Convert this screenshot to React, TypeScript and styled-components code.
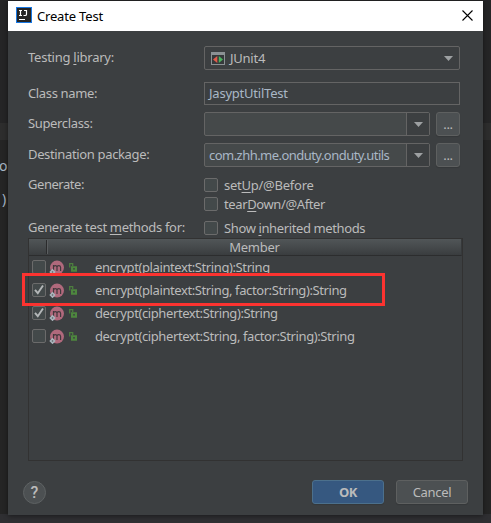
import React from "react";
import styled, { createGlobalStyle, css } from "styled-components";

const GlobalStyle = createGlobalStyle`
  * { box-sizing: border-box; }
  body { margin: 0; background: #272727; overflow: hidden; }
`;

const Screen = styled.div`
  position: relative;
  width: 491px;
  height: 523px;
  padding: 1px 8px 0;
  overflow: hidden;
  background: linear-gradient(#252526 0 123px, #2d2d2d 123px 140px, #252525 140px 514px, #2f2f32 514px);
  font: 13px/18px "Noto Sans", "Open Sans", sans-serif;
  color: #bbbbbb;
`;

const CodeFragment = styled.span<{ $top: number; $left: number }>`
  position: absolute;
  top: ${(p) => p.$top}px;
  left: ${(p) => p.$left}px;
  font: 14px/18px "Noto Sans", sans-serif;
  color: #a9b7c6;
`;

const Dialog = styled.main`
  position: relative;
  width: 475px;
  height: 514px;
  display: flex;
  flex-direction: column;
  background: #3c3f41;
  box-shadow: 0 1px 5px rgba(0, 0, 0, 0.45);
`;

const TitleBar = styled.header`
  height: 30px;
  flex: none;
  display: flex;
  align-items: center;
  padding: 0 10px 2px 8px;
  background: #ffffff;
  color: #000000;
`;

const Title = styled.h1`
  flex: 1;
  margin: 0 0 0 5px;
  padding-top: 1px;
  font-size: 13px;
  font-weight: 400;
  letter-spacing: -0.18px;
`;

const CloseButton = styled.button`
  padding: 0;
  border: 0;
  background: none;
  width: 11px;
  height: 11px;
  display: flex;
`;

const Form = styled.section`
  padding: 15px 23px 0 20px;
  display: flex;
  flex-direction: column;
`;

const FormRow = styled.div<{ $height: number; $gap: number }>`
  display: flex;
  align-items: center;
  height: ${(p) => p.$height}px;
  margin-bottom: ${(p) => p.$gap}px;
`;

const Label = styled.label<{ $spacing?: number }>`
  width: 176px;
  flex: none;
  padding-bottom: 2px;
  white-space: nowrap;
  letter-spacing: ${(p) => p.$spacing ?? -0.35}px;
`;

const Mnemonic = styled.span`
  text-decoration: underline;
  text-decoration-thickness: 1px;
  text-underline-offset: 2px;
  text-decoration-skip-ink: none;
`;

const fieldBox = css`
  height: 100%;
  display: flex;
  align-items: center;
  border: 1px solid #646464;
`;

const Select = styled.div`
  ${fieldBox}
  width: 256px;
  border-radius: 2px;
  padding: 0 6px;
`;

const SelectText = styled.span`
  flex: 1;
  margin-left: 5px;
  letter-spacing: -0.25px;
`;

const TextField = styled.div`
  ${fieldBox}
  width: 256px;
  padding: 0 0 1px 4px;
  color: #a9b7c6;
  letter-spacing: -0.22px;
`;

const ComboBox = styled.div`
  ${fieldBox}
  width: 226px;
  margin-right: 6px;
  border-radius: 2px;
  background: #45494a;
  color: #a9b7c6;
`;

const ComboText = styled.span`
  flex: 1;
  padding: 0 0 1px 4px;
  white-space: nowrap;
  letter-spacing: -0.54px;
`;

const ComboArrow = styled.span`
  width: 23px;
  height: 100%;
  display: flex;
  align-items: center;
  justify-content: center;
  border-left: 1px solid #646464;
  background: #3c3f41;
`;

const Button = styled.button<{ $kind?: "browse" | "primary" }>`
  width: ${(p) => (p.$kind === "browse" ? 24 : 72)}px;
  height: 24px;
  padding: 0;
  border: 1px solid ${(p) => (p.$kind === "primary" ? "#4c708c" : "#5e6060")};
  border-radius: 3px;
  background: ${(p) => (p.$kind === "primary" ? "#365880" : "#4c5052")};
  box-shadow: 0 1px 1px rgba(0, 0, 0, 0.12);
  color: #bbbbbb;
  font: inherit;
  font-weight: ${(p) => (p.$kind === "primary" ? 700 : 400)};
  letter-spacing: ${(p) => (p.$kind ? -0.4 : -0.3)}px;
`;

const CheckMark = styled.span`
  width: 14px;
  height: 14px;
  flex: none;
  display: flex;
  border: 1px solid #6b6b6b;
  border-radius: 2px;
  background: #43494a;
`;

const OptionText = styled.span<{ $spacing?: number }>`
  margin-left: 6px;
  letter-spacing: ${(p) => p.$spacing ?? -0.38}px;
  white-space: nowrap;
`;

const Table = styled.section`
  width: 435px;
  height: 223px;
  margin-left: 20px;
  border: 1px solid #323232;
`;

const TableHeader = styled.div`
  width: 433px;
  height: 17px;
  display: flex;
  border-bottom: 1px solid #2c2d2e;
  border-right: 1px solid #36393b;
  background: linear-gradient(#515658, #3a3d3f);
  line-height: 16px;
`;

const HeaderCheck = styled.div`
  width: 18px;
  margin: 1px 0;
  border-right: 1px solid #2a2b2c;
  box-shadow: 1px 0 #5b5e60;
`;

const HeaderMember = styled.div`
  flex: 1;
  padding-left: 1px;
  text-align: center;
  letter-spacing: -0.25px;
`;

const MemberRow = styled.div`
  height: 23px;
  display: flex;
  align-items: center;
  padding: 0 0 1px 3px;
`;

const MethodIcons = styled.span`
  width: 49px;
  height: 16px;
  display: flex;
  flex: none;
`;

const MemberName = styled.span`
  letter-spacing: -0.4px;
  white-space: nowrap;
`;

const Highlight = styled.div`
  position: absolute;
  left: 14px;
  top: 272px;
  width: 363px;
  height: 33px;
  border: 3px solid #fc3330;
`;

const Footer = styled.footer`
  display: flex;
  align-items: center;
  gap: 12px;
  padding: 19px 15px 0;
`;

const HelpButton = styled.button`
  width: 23px;
  height: 23px;
  margin-right: auto;
  padding: 0;
  border: 1px solid #5e6263;
  border-radius: 50%;
  background: #4c5052;
  color: #bbbbbb;
  font: 500 16px/21px Roboto, sans-serif;
`;

const Arrow = () => (
  <svg width="9" height="5" viewBox="0 0 9 5">
    <path d="M0 0h9L4.5 5z" fill="#9da0a2" />
  </svg>
);

const IdeaLogo = () => (
  <svg width="16" height="16" viewBox="0 0 16 16">
    <rect x=".5" y=".5" width="15" height="15" fill="#242424" stroke="#1878e4" />
    <path d="M3 3.5h3M4.5 3.5v5M3 8.5h3M8 3.5h2.5v3.7q0 1.3-1.3 1.3H7.5" stroke="#fff" strokeWidth="1.2" fill="none" />
    <path d="M3 12.5h6" stroke="#fff" />
  </svg>
);

const JUnitIcon = () => (
  <svg width="14" height="13" viewBox="0 0 14 13">
    <path d="M0 0h14v13H0z" fill="#8b9194" />
    <path d="M1 3h12v9H1z" fill="#35393b" />
    <path d="M6.3 4v7L2 7.5z" fill="#e05c4b" />
    <path d="M7.8 4v7L12 7.5z" fill="#4bb35e" />
  </svg>
);

const MethodGraphics = () => (
  <svg width="32" height="16" viewBox="0 0 32 16">
    <circle cx="11" cy="8.6" r="7" fill="#b0697c" />
    <path d="M7.5 12V6M7.5 8q.3-1.4 1.8-1.4T11 8.2V12M11 8.2q.2-1.6 1.8-1.6t1.8 1.6V12" fill="none" stroke="#42383d" strokeWidth="1.2" />
    <path d="M6.5 9.8l3.2 3.2-3.2 3.2L3.3 13z" fill="#abb5bd" />
    <path d="M6.5 12l1 1-1 1-1-1z" fill="#62686b" />
    <path d="M23.7 8.5V4.7h3V7" fill="none" stroke="#4d7e3f" strokeWidth="1.3" />
    <path d="M25 7.3h6v5.4h-6zM27 9.3v1.3h2V9.3z" fill="#4d873e" fillRule="evenodd" />
  </svg>
);

function Checkbox({ checked = false }: { checked?: boolean }) {
  return (
    <CheckMark role="checkbox" aria-checked={checked}>
      {checked && (
        <svg width="12" height="12" viewBox="0 0 12 12">
          <path d="M2 5.8l2.8 3.4L10 1.5" fill="none" stroke="#b4b7b8" strokeWidth="1.9" />
        </svg>
      )}
    </CheckMark>
  );
}

const members = [
  { name: "encrypt(plaintext:String):String", checked: false },
  { name: "encrypt(plaintext:String, factor:String):String", checked: true },
  { name: "decrypt(ciphertext:String):String", checked: true },
  { name: "decrypt(ciphertext:String, factor:String):String", checked: false },
];

export default function App() {
  return (
    <Screen>
      <GlobalStyle />
      <CodeFragment $top={157} $left={-1}>o</CodeFragment>
      <CodeFragment $top={190} $left={2}>)</CodeFragment>
      <Dialog>
        <TitleBar>
          <IdeaLogo />
          <Title>Create Test</Title>
          <CloseButton aria-label="Close">
            <svg width="11" height="11" viewBox="0 0 11 11">
              <path d="M.5.5l10 10M10.5.5l-10 10" stroke="#000" strokeWidth="1.1" />
            </svg>
          </CloseButton>
        </TitleBar>
        <Form>
          <FormRow $height={24} $gap={12}>
            <Label $spacing={-0.25}>Testing <Mnemonic>l</Mnemonic>ibrary:</Label>
            <Select><JUnitIcon /><SelectText>JUnit4</SelectText><Arrow /></Select>
          </FormRow>
          <FormRow $height={23} $gap={7}>
            <Label>Class name:</Label>
            <TextField>JasyptUtilTest</TextField>
          </FormRow>
          <FormRow $height={24} $gap={7}>
            <Label $spacing={-0.35}>Superclass:</Label>
            <ComboBox><ComboText /><ComboArrow><Arrow /></ComboArrow></ComboBox>
            <Button $kind="browse">...</Button>
          </FormRow>
          <FormRow $height={24} $gap={9}>
            <Label>Destination package:</Label>
            <ComboBox><ComboText>com.zhh.me.onduty.onduty.utils</ComboText><ComboArrow><Arrow /></ComboArrow></ComboBox>
            <Button $kind="browse">...</Button>
          </FormRow>
          <FormRow $height={18} $gap={1}>
            <Label $spacing={-0.45}>Generate:</Label>
            <Checkbox />
            <OptionText $spacing={-0.25}>set<Mnemonic>U</Mnemonic>p/@Before</OptionText>
          </FormRow>
          <FormRow $height={18} $gap={6}>
            <Label />
            <Checkbox />
            <OptionText>tear<Mnemonic>D</Mnemonic>own/@After</OptionText>
          </FormRow>
          <FormRow $height={18} $gap={1}>
            <Label $spacing={-0.32}>Generate test <Mnemonic>m</Mnemonic>ethods for:</Label>
            <Checkbox />
            <OptionText>Show <Mnemonic>i</Mnemonic>nherited methods</OptionText>
          </FormRow>
        </Form>
        <Table>
          <TableHeader><HeaderCheck /><HeaderMember>Member</HeaderMember></TableHeader>
          {members.map((member) => (
            <MemberRow key={member.name}>
              <Checkbox checked={member.checked} />
              <MethodIcons><MethodGraphics /></MethodIcons>
              <MemberName>{member.name}</MemberName>
            </MemberRow>
          ))}
        </Table>
        <Footer>
          <HelpButton>?</HelpButton>
          <Button $kind="primary">OK</Button>
          <Button>Cancel</Button>
        </Footer>
        <Highlight />
      </Dialog>
    </Screen>
  );
}
